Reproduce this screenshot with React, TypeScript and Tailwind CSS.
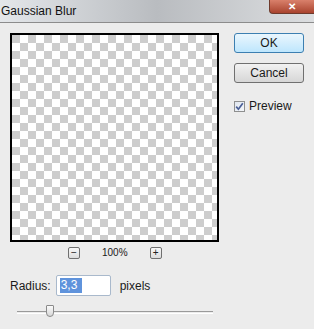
import React from 'react';

const font = { fontFamily: '"Liberation Sans", Arial, sans-serif' };

function SmallBox({ label }: { label: string }) {
  return (
    <div className="w-[12px] h-[12px] rounded-[2px] border border-[#707070] bg-gradient-to-b from-[#f8f8f8] to-[#dcdcdc] flex items-center justify-center text-[10px] leading-none text-[#222]">
      {label}
    </div>
  );
}

export default function App() {
  return (
    <div className="w-[314px] h-[329px] bg-[#ececec] flex flex-col overflow-hidden text-[#1a1a1a]" style={font}>
      {/* Title bar */}
      <div className="relative h-[22px] shrink-0 bg-gradient-to-r from-[#e4e7ea] via-[#b9bcc0] to-[#dcdee0] flex items-center pl-[1px]">
        <span className="text-[12px] text-[#111]">Gaussian Blur</span>
        <div className="absolute right-0 top-0 w-[45px] h-[14px] rounded-bl-[4px] border border-t-0 border-r-0 border-[#6e3a2c] bg-gradient-to-b from-[#d9806b] to-[#a9432e] flex items-center justify-center">
          <span className="text-white text-[10px] font-bold leading-none">✕</span>
        </div>
      </div>
      <div className="h-px bg-[#8c8c8c] shrink-0" />

      {/* Body */}
      <div className="flex flex-row items-start">
        <div className="ml-[10px] mt-[10px] w-[209px] flex flex-col">
          <div className="w-[209px] h-[209px] border-2 border-black bg-[conic-gradient(#fff_25%,#cdcdcd_0_50%,#fff_0_75%,#cdcdcd_0)] bg-[length:16px_16px]" />

          <div className="mt-[5px] flex items-center pl-[58px]">
            <SmallBox label="−" />
            <span className="ml-[22px] text-[10px] leading-none">100%</span>
            <div className="ml-[22px]"><SmallBox label="+" /></div>
          </div>

          <div className="mt-[16px] flex items-center">
            <span className="text-[12px]">Radius:</span>
            <div className="ml-[5px] w-[55px] h-[21px] bg-white border border-[#a9b9cc] rounded-[2px] flex items-center pl-[3px]">
              <span className="bg-[#5f93dc] text-white text-[12px] leading-[15px] px-[1px] pr-[5px]">3,3</span>
            </div>
            <span className="ml-[9px] text-[12px]">pixels</span>
          </div>

          <div className="relative mt-[15px] ml-[7px] w-[196px] h-[3px] border-t border-[#9a9a9a] border-b border-b-white">
            <div className="absolute left-[29px] -top-[7px] w-[8px] h-[12px] rounded-b-[4px] rounded-t-[1px] border border-[#8a8a8a] bg-gradient-to-b from-[#fafafa] to-[#d8d8d8]" />
          </div>
        </div>

        <div className="ml-[15px] mt-[10px] flex flex-col w-[70px]">
          <button className="h-[20px] w-[70px] rounded-[3px] border border-[#3c7fb1] bg-gradient-to-b from-[#eaf6fd] to-[#bee6fd] text-[12px] leading-none">OK</button>
          <button className="mt-[10px] h-[20px] w-[70px] rounded-[3px] border border-[#707070] bg-gradient-to-b from-[#f2f2f2] to-[#d6d6d6] text-[12px] leading-none">Cancel</button>
          <div className="mt-[14px] flex items-center">
            <div className="w-[11px] h-[11px] border border-[#8e8f8f] bg-gradient-to-br from-[#dfe6ef] to-[#f4f6f9] flex items-center justify-center">
              <svg width="9" height="9" viewBox="0 0 9 9">
                <path d="M1.2 4.6 L3.4 7.2 L7.8 1.2" stroke="#4a5f97" strokeWidth="1.7" fill="none" />
              </svg>
            </div>
            <span className="ml-[4px] text-[12px]">Preview</span>
          </div>
        </div>
      </div>
    </div>
  );
}
